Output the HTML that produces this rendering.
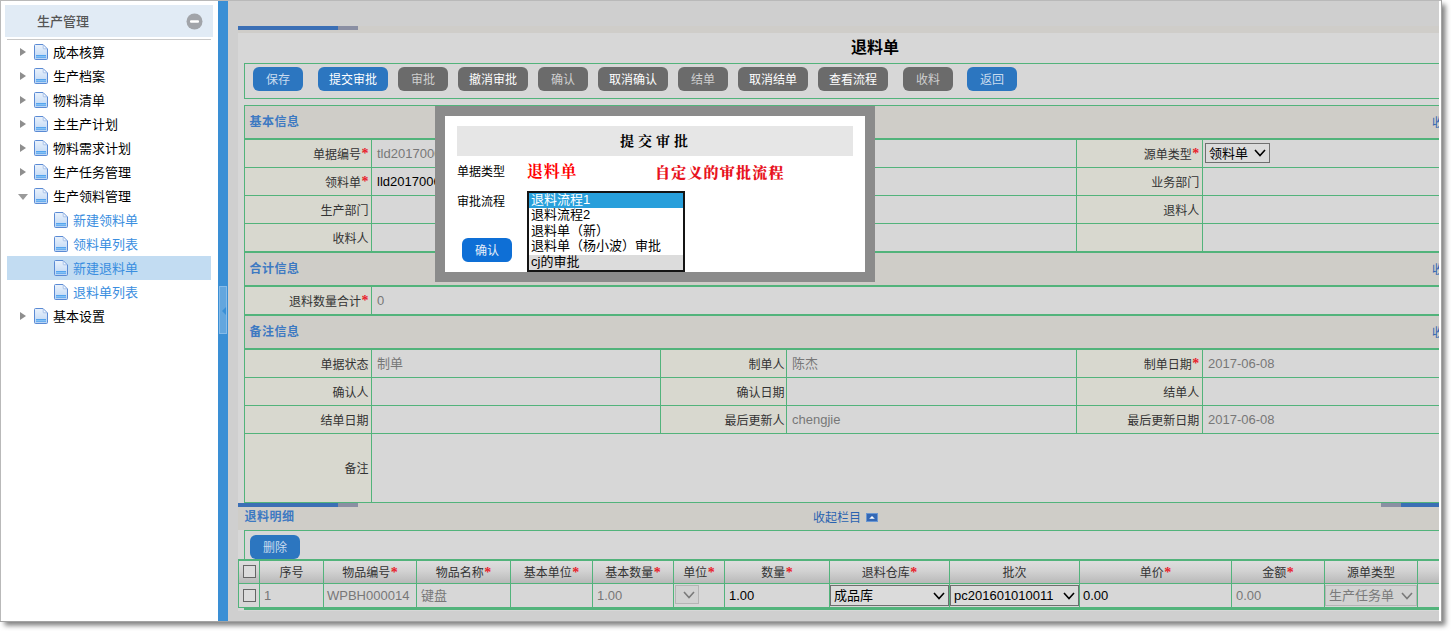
<!DOCTYPE html>
<html lang="zh-CN">
<head>
<meta charset="utf-8">
<title>退料单</title>
<style>
*{box-sizing:border-box;margin:0;padding:0}
html,body{width:1451px;height:631px;overflow:hidden;background:#fff}
body{position:relative;font-family:"Liberation Sans","Noto Sans CJK SC",sans-serif;font-size:12px;color:#333;font-weight:400}
.abs{position:absolute}
#frame{position:absolute;left:0;top:0;width:1442px;height:622px;overflow:hidden;background:#fff;box-shadow:3.5px 3.5px 5px 0 rgba(0,0,0,0.5)}
#bT{position:absolute;left:0;top:0;width:1442px;height:1px;background:#b9b9b9;z-index:50}
#bL{position:absolute;left:0;top:0;width:1px;height:622px;background:#b9b9b9;z-index:50}
#bB{position:absolute;left:0;top:621px;width:1442px;height:1px;background:#a3a3a3;z-index:50}
#bR{position:absolute;left:1441px;top:0;width:1px;height:622px;background:#a3a3a3;z-index:50}
#whiteR{position:absolute;left:1439px;top:1px;width:2px;height:620px;background:rgba(255,255,255,0.82)}
/* sidebar */
#side{position:absolute;left:0;top:0;width:218px;height:621px;background:#fff}
#shead{position:absolute;left:5px;top:5px;width:208px;height:32px;background:#e1ebf5}
#shead span{position:absolute;left:32px;top:0;line-height:33px;font-size:13px;color:#555;font-weight:500}
#sline{position:absolute;left:7px;top:39px;width:204px;height:1px;background:#c9c9c9}
.tr{position:absolute;left:7px;width:204px;height:24px;line-height:24px;font-size:13px;color:#000;white-space:nowrap}
.tr .ar{position:absolute;left:13px;top:8.2px;width:0;height:0;border-left:6.5px solid #8e8e8e;border-top:4.6px solid transparent;border-bottom:4.6px solid transparent}
.tr .ad{position:absolute;left:11px;top:10px;width:0;height:0;border-top:6.5px solid #9a9a9a;border-left:5px solid transparent;border-right:5px solid transparent}
.tr svg{position:absolute;left:27px;top:4px}
.tr b{position:absolute;left:46px;top:1px;font-weight:400}
.tr.c{color:#3a8ee0}
.tr.c svg{left:47px}
.tr.c b{left:66px}
.tr.sel{background:#c2dcf2}
#bar{position:absolute;left:218px;top:0;width:10px;height:621px;background:#3a8fd5}
#hand{position:absolute;left:219px;top:286px;width:8px;height:48px;background:#63a6de;border:1px solid #86bbe8}
#hand i{position:absolute;left:1.5px;top:20px;width:0;height:0;border-right:4.5px solid #3a8fd5;border-top:4.5px solid transparent;border-bottom:4.5px solid transparent}
/* main */
#main{position:absolute;left:228px;top:0;width:1211px;height:621px;background:#cfcfcf;overflow:hidden}
#panel{position:absolute;left:10px;top:33px;width:1300px;height:578px;background:#d7d7d7}

#m{position:absolute;left:-228px;top:0;width:1460px;height:621px}
.ttl{font-size:16px;font-weight:700;color:#000}
.vl,.td,.sl{font-weight:400}
.btn{height:24px;line-height:27px;border-radius:6px;text-align:center;font-size:12px;white-space:nowrap}
.b2{background:#2c76c0;color:#c9dcef}
.b4{background:#2c76c0;color:#fff}
.g2{background:#6b6b6b;color:#cfcfcf}
.g4{background:#6b6b6b;color:#fff}
.sh{font-size:12px;font-weight:700;color:#3d79c2;white-space:nowrap;letter-spacing:0.5px;margin-left:-0.5px}
.lk{padding-top:1px;font-size:12px;color:#2a62b0;white-space:nowrap}
.lb{text-align:right;padding-top:1.5px;font-size:12px;color:#333;white-space:nowrap}
.rq{color:#e8202a;font-style:normal;font-weight:700;font-family:"Liberation Serif","Noto Serif CJK SC",serif;font-size:14px;line-height:0;position:relative;top:-0.5px;margin-left:0.5px}
.vl{font-size:13px;color:#777;white-space:nowrap}
.th{height:22px;line-height:24px;text-align:center;font-size:12px;color:#333;white-space:nowrap}
.td{height:23px;line-height:23px;font-size:13px;white-space:nowrap}
.cb{width:13px;height:13px;border:1px solid #666;background:#dcdcdc}
.sl{border:1px solid #6f6f6f;background:#dbdbdb;color:#000;font-size:13px;padding-left:3px;white-space:nowrap;overflow:hidden}
.sl svg{position:absolute;right:3px;top:50%;margin-top:-4px}
.sl.dis{color:#7a7a7a;border-color:#b5b5b5;background:#d2d2d2}
/* modal */
#mo{position:absolute;left:435px;top:106px;width:440px;height:176px;background:#8b8b8b}
#mi{position:absolute;left:10px;top:10px;width:420px;height:156px;background:#fff}
#mt{position:absolute;left:12px;top:10px;width:396px;height:30px;line-height:30px;background:#e6e6e6;text-align:center;font-family:"Liberation Serif","Noto Serif CJK SC",serif;font-weight:700;font-size:14px;color:#000;letter-spacing:4px;padding-left:2px;padding-top:1px}
.ml{position:absolute;left:12px;padding-top:1.5px;font-size:12px;color:#000;line-height:20px;height:20px;white-space:nowrap}
.mr{position:absolute;font-family:"Liberation Serif","Noto Serif CJK SC",serif;font-weight:700;color:#f00;white-space:nowrap;line-height:22px;height:22px}
#lbx{position:absolute;left:82px;top:75px;width:158px;height:81px;border:2px solid #141414;background:#fff;font-size:13px;color:#000}
#lbx div{height:15.4px;line-height:13.6px;padding-left:2px;white-space:nowrap}
#lbx .s{background:#289fdb;color:#fff}
#lbx .h{background:#dcdcdc}
#mok{position:absolute;left:17px;top:122px;width:50px;height:24px;line-height:27px;border-radius:6px;background:#0e6fd6;color:#e6f0fb;text-align:center;font-size:12px}
</style>
</head>
<body>
<svg width="0" height="0" style="position:absolute">
<defs>
<linearGradient id="dg" x1="0" y1="0" x2="0" y2="1"><stop offset="0" stop-color="#eaf2fc"/><stop offset="0.6" stop-color="#cfe1f7"/><stop offset="1" stop-color="#b7d3f4"/></linearGradient>
</defs>
</svg>
<div id="frame">
<div id="side">
<div id="shead"><span>生产管理</span>
<svg class="abs" style="left:181px;top:8px" width="17" height="17" viewBox="0 0 17 17"><circle cx="8.5" cy="8.5" r="8" fill="#a1a4a9"/><rect x="4" y="7.3" width="9" height="2.4" rx="1" fill="#fff"/></svg>
</div>
<div id="sline"></div>
<div class="tr" style="top:40px"><i class="ar"></i><svg width="14" height="16" viewBox="0 0 14 16"><path d="M1.5 0.5 H9 L13.5 5 V14.5 Q13.5 15.5 12.5 15.5 H1.5 Q0.5 15.5 0.5 14.5 V1.5 Q0.5 0.5 1.5 0.5 Z" fill="url(#dg)" stroke="#5a8ad4" stroke-width="1"/><path d="M9.2 0.8 V4.2 Q9.2 4.8 9.8 4.8 H13.2 Z" fill="#f1f6fd" stroke="#8fb0e4" stroke-width="0.7"/><rect x="2" y="11" width="10" height="2.8" fill="#55a4ee"/><rect x="2" y="12" width="10" height="0.9" fill="#8cc6f7"/></svg><b>成本核算</b></div>
<div class="tr" style="top:64px"><i class="ar"></i><svg width="14" height="16" viewBox="0 0 14 16"><path d="M1.5 0.5 H9 L13.5 5 V14.5 Q13.5 15.5 12.5 15.5 H1.5 Q0.5 15.5 0.5 14.5 V1.5 Q0.5 0.5 1.5 0.5 Z" fill="url(#dg)" stroke="#5a8ad4" stroke-width="1"/><path d="M9.2 0.8 V4.2 Q9.2 4.8 9.8 4.8 H13.2 Z" fill="#f1f6fd" stroke="#8fb0e4" stroke-width="0.7"/><rect x="2" y="11" width="10" height="2.8" fill="#55a4ee"/><rect x="2" y="12" width="10" height="0.9" fill="#8cc6f7"/></svg><b>生产档案</b></div>
<div class="tr" style="top:88px"><i class="ar"></i><svg width="14" height="16" viewBox="0 0 14 16"><path d="M1.5 0.5 H9 L13.5 5 V14.5 Q13.5 15.5 12.5 15.5 H1.5 Q0.5 15.5 0.5 14.5 V1.5 Q0.5 0.5 1.5 0.5 Z" fill="url(#dg)" stroke="#5a8ad4" stroke-width="1"/><path d="M9.2 0.8 V4.2 Q9.2 4.8 9.8 4.8 H13.2 Z" fill="#f1f6fd" stroke="#8fb0e4" stroke-width="0.7"/><rect x="2" y="11" width="10" height="2.8" fill="#55a4ee"/><rect x="2" y="12" width="10" height="0.9" fill="#8cc6f7"/></svg><b>物料清单</b></div>
<div class="tr" style="top:112px"><i class="ar"></i><svg width="14" height="16" viewBox="0 0 14 16"><path d="M1.5 0.5 H9 L13.5 5 V14.5 Q13.5 15.5 12.5 15.5 H1.5 Q0.5 15.5 0.5 14.5 V1.5 Q0.5 0.5 1.5 0.5 Z" fill="url(#dg)" stroke="#5a8ad4" stroke-width="1"/><path d="M9.2 0.8 V4.2 Q9.2 4.8 9.8 4.8 H13.2 Z" fill="#f1f6fd" stroke="#8fb0e4" stroke-width="0.7"/><rect x="2" y="11" width="10" height="2.8" fill="#55a4ee"/><rect x="2" y="12" width="10" height="0.9" fill="#8cc6f7"/></svg><b>主生产计划</b></div>
<div class="tr" style="top:136px"><i class="ar"></i><svg width="14" height="16" viewBox="0 0 14 16"><path d="M1.5 0.5 H9 L13.5 5 V14.5 Q13.5 15.5 12.5 15.5 H1.5 Q0.5 15.5 0.5 14.5 V1.5 Q0.5 0.5 1.5 0.5 Z" fill="url(#dg)" stroke="#5a8ad4" stroke-width="1"/><path d="M9.2 0.8 V4.2 Q9.2 4.8 9.8 4.8 H13.2 Z" fill="#f1f6fd" stroke="#8fb0e4" stroke-width="0.7"/><rect x="2" y="11" width="10" height="2.8" fill="#55a4ee"/><rect x="2" y="12" width="10" height="0.9" fill="#8cc6f7"/></svg><b>物料需求计划</b></div>
<div class="tr" style="top:160px"><i class="ar"></i><svg width="14" height="16" viewBox="0 0 14 16"><path d="M1.5 0.5 H9 L13.5 5 V14.5 Q13.5 15.5 12.5 15.5 H1.5 Q0.5 15.5 0.5 14.5 V1.5 Q0.5 0.5 1.5 0.5 Z" fill="url(#dg)" stroke="#5a8ad4" stroke-width="1"/><path d="M9.2 0.8 V4.2 Q9.2 4.8 9.8 4.8 H13.2 Z" fill="#f1f6fd" stroke="#8fb0e4" stroke-width="0.7"/><rect x="2" y="11" width="10" height="2.8" fill="#55a4ee"/><rect x="2" y="12" width="10" height="0.9" fill="#8cc6f7"/></svg><b>生产任务管理</b></div>
<div class="tr" style="top:184px"><i class="ad"></i><svg width="14" height="16" viewBox="0 0 14 16"><path d="M1.5 0.5 H9 L13.5 5 V14.5 Q13.5 15.5 12.5 15.5 H1.5 Q0.5 15.5 0.5 14.5 V1.5 Q0.5 0.5 1.5 0.5 Z" fill="url(#dg)" stroke="#5a8ad4" stroke-width="1"/><path d="M9.2 0.8 V4.2 Q9.2 4.8 9.8 4.8 H13.2 Z" fill="#f1f6fd" stroke="#8fb0e4" stroke-width="0.7"/><rect x="2" y="11" width="10" height="2.8" fill="#55a4ee"/><rect x="2" y="12" width="10" height="0.9" fill="#8cc6f7"/></svg><b>生产领料管理</b></div>
<div class="tr c" style="top:208px"><svg width="14" height="16" viewBox="0 0 14 16"><path d="M1.5 0.5 H9 L13.5 5 V14.5 Q13.5 15.5 12.5 15.5 H1.5 Q0.5 15.5 0.5 14.5 V1.5 Q0.5 0.5 1.5 0.5 Z" fill="url(#dg)" stroke="#5a8ad4" stroke-width="1"/><path d="M9.2 0.8 V4.2 Q9.2 4.8 9.8 4.8 H13.2 Z" fill="#f1f6fd" stroke="#8fb0e4" stroke-width="0.7"/><rect x="2" y="11" width="10" height="2.8" fill="#55a4ee"/><rect x="2" y="12" width="10" height="0.9" fill="#8cc6f7"/></svg><b>新建领料单</b></div>
<div class="tr c" style="top:232px"><svg width="14" height="16" viewBox="0 0 14 16"><path d="M1.5 0.5 H9 L13.5 5 V14.5 Q13.5 15.5 12.5 15.5 H1.5 Q0.5 15.5 0.5 14.5 V1.5 Q0.5 0.5 1.5 0.5 Z" fill="url(#dg)" stroke="#5a8ad4" stroke-width="1"/><path d="M9.2 0.8 V4.2 Q9.2 4.8 9.8 4.8 H13.2 Z" fill="#f1f6fd" stroke="#8fb0e4" stroke-width="0.7"/><rect x="2" y="11" width="10" height="2.8" fill="#55a4ee"/><rect x="2" y="12" width="10" height="0.9" fill="#8cc6f7"/></svg><b>领料单列表</b></div>
<div class="tr c sel" style="top:256px"><svg width="14" height="16" viewBox="0 0 14 16"><path d="M1.5 0.5 H9 L13.5 5 V14.5 Q13.5 15.5 12.5 15.5 H1.5 Q0.5 15.5 0.5 14.5 V1.5 Q0.5 0.5 1.5 0.5 Z" fill="url(#dg)" stroke="#5a8ad4" stroke-width="1"/><path d="M9.2 0.8 V4.2 Q9.2 4.8 9.8 4.8 H13.2 Z" fill="#f1f6fd" stroke="#8fb0e4" stroke-width="0.7"/><rect x="2" y="11" width="10" height="2.8" fill="#55a4ee"/><rect x="2" y="12" width="10" height="0.9" fill="#8cc6f7"/></svg><b>新建退料单</b></div>
<div class="tr c" style="top:280px"><svg width="14" height="16" viewBox="0 0 14 16"><path d="M1.5 0.5 H9 L13.5 5 V14.5 Q13.5 15.5 12.5 15.5 H1.5 Q0.5 15.5 0.5 14.5 V1.5 Q0.5 0.5 1.5 0.5 Z" fill="url(#dg)" stroke="#5a8ad4" stroke-width="1"/><path d="M9.2 0.8 V4.2 Q9.2 4.8 9.8 4.8 H13.2 Z" fill="#f1f6fd" stroke="#8fb0e4" stroke-width="0.7"/><rect x="2" y="11" width="10" height="2.8" fill="#55a4ee"/><rect x="2" y="12" width="10" height="0.9" fill="#8cc6f7"/></svg><b>退料单列表</b></div>
<div class="tr" style="top:304px"><i class="ar"></i><svg width="14" height="16" viewBox="0 0 14 16"><path d="M1.5 0.5 H9 L13.5 5 V14.5 Q13.5 15.5 12.5 15.5 H1.5 Q0.5 15.5 0.5 14.5 V1.5 Q0.5 0.5 1.5 0.5 Z" fill="url(#dg)" stroke="#5a8ad4" stroke-width="1"/><path d="M9.2 0.8 V4.2 Q9.2 4.8 9.8 4.8 H13.2 Z" fill="#f1f6fd" stroke="#8fb0e4" stroke-width="0.7"/><rect x="2" y="11" width="10" height="2.8" fill="#55a4ee"/><rect x="2" y="12" width="10" height="0.9" fill="#8cc6f7"/></svg><b>基本设置</b></div>
</div>
<div id="bar"></div>
<div id="hand"><i></i></div>
<div id="main">
<div id="panel"></div>
<div id="m">
<div class="abs" style="left:238px;top:26px;width:1222px;height:7px;background:#cfcdc9;"></div>
<div class="abs" style="left:238px;top:26px;width:100px;height:4px;background:#3b6fb5;"></div>
<div class="abs" style="left:338px;top:26px;width:20px;height:4px;background:#8a8fa3;"></div>
<div class="abs ttl" style="left:775px;top:37px;width:200px;height:22px;line-height:22px;text-align:center">退料单</div>
<div class="abs" style="left:244px;top:63px;width:1216px;height:36px;border:1px solid #52b37b"></div>
<div class="abs btn b2" style="left:253px;top:67px;width:50px">保存</div>
<div class="abs btn b4" style="left:318px;top:67px;width:70px">提交审批</div>
<div class="abs btn g2" style="left:398px;top:67px;width:50px">审批</div>
<div class="abs btn g4" style="left:458px;top:67px;width:70px">撤消审批</div>
<div class="abs btn g2" style="left:538px;top:67px;width:50px">确认</div>
<div class="abs btn g4" style="left:598px;top:67px;width:70px">取消确认</div>
<div class="abs btn g2" style="left:678px;top:67px;width:50px">结单</div>
<div class="abs btn g4" style="left:738px;top:67px;width:70px">取消结单</div>
<div class="abs btn g4" style="left:818px;top:67px;width:70px">查看流程</div>
<div class="abs btn g2" style="left:903px;top:67px;width:50px">收料</div>
<div class="abs btn b2" style="left:967px;top:67px;width:50px">返回</div>
<div class="abs" style="left:244px;top:105px;width:1216px;height:1px;background:#52b37b;"></div>
<div class="abs" style="left:245px;top:106px;width:1215px;height:32px;background:#cfcdc8;"></div>
<div class="abs sh" style="left:250px;top:106px;height:32px;line-height:32px">基本信息</div>
<div class="abs lk" style="left:1432px;top:106px;height:32px;line-height:32px">收起栏目</div>
<div class="abs" style="left:244px;top:138px;width:1216px;height:2px;background:#52b37b;"></div>
<div class="abs" style="left:245px;top:140px;width:126px;height:27px;background:#d8d8cf;"></div>
<div class="abs lb" style="left:245px;top:140px;width:123.5px;height:27px;line-height:27px">单据编号<i class="rq">*</i></div>
<div class="abs vl" style="left:377px;top:140px;height:27px;line-height:27px"><span>tld2017006080002</span></div>
<div class="abs" style="left:661px;top:140px;width:126px;height:27px;background:#d8d8cf;"></div>
<div class="abs lb" style="left:661px;top:140px;width:123.5px;height:27px;line-height:27px"></div>
<div class="abs" style="left:1077px;top:140px;width:126px;height:27px;background:#d8d8cf;"></div>
<div class="abs lb" style="left:1077px;top:140px;width:122.2px;height:27px;line-height:27px">源单类型<i class="rq">*</i></div>
<div class="abs" style="left:371px;top:140px;width:1px;height:27px;background:#52b37b;"></div>
<div class="abs" style="left:660px;top:140px;width:1px;height:27px;background:#52b37b;"></div>
<div class="abs" style="left:786px;top:140px;width:1px;height:27px;background:#52b37b;"></div>
<div class="abs" style="left:1076px;top:140px;width:1px;height:27px;background:#52b37b;"></div>
<div class="abs" style="left:1202px;top:140px;width:1px;height:27px;background:#52b37b;"></div>
<div class="abs" style="left:244px;top:167px;width:1216px;height:1px;background:#52b37b;"></div>
<div class="abs" style="left:245px;top:168px;width:126px;height:27px;background:#d8d8cf;"></div>
<div class="abs lb" style="left:245px;top:168px;width:123.5px;height:27px;line-height:27px">领料单<i class="rq">*</i></div>
<div class="abs vl" style="left:377px;top:168px;height:27px;line-height:27px"><span style="color:#000">lld2017006080001</span></div>
<div class="abs" style="left:661px;top:168px;width:126px;height:27px;background:#d8d8cf;"></div>
<div class="abs lb" style="left:661px;top:168px;width:123.5px;height:27px;line-height:27px"></div>
<div class="abs" style="left:1077px;top:168px;width:126px;height:27px;background:#d8d8cf;"></div>
<div class="abs lb" style="left:1077px;top:168px;width:122.2px;height:27px;line-height:27px">业务部门</div>
<div class="abs" style="left:371px;top:168px;width:1px;height:27px;background:#52b37b;"></div>
<div class="abs" style="left:660px;top:168px;width:1px;height:27px;background:#52b37b;"></div>
<div class="abs" style="left:786px;top:168px;width:1px;height:27px;background:#52b37b;"></div>
<div class="abs" style="left:1076px;top:168px;width:1px;height:27px;background:#52b37b;"></div>
<div class="abs" style="left:1202px;top:168px;width:1px;height:27px;background:#52b37b;"></div>
<div class="abs" style="left:244px;top:195px;width:1216px;height:1px;background:#52b37b;"></div>
<div class="abs" style="left:245px;top:196px;width:126px;height:27px;background:#d8d8cf;"></div>
<div class="abs lb" style="left:245px;top:196px;width:123.5px;height:27px;line-height:27px">生产部门</div>
<div class="abs" style="left:661px;top:196px;width:126px;height:27px;background:#d8d8cf;"></div>
<div class="abs lb" style="left:661px;top:196px;width:123.5px;height:27px;line-height:27px"></div>
<div class="abs" style="left:1077px;top:196px;width:126px;height:27px;background:#d8d8cf;"></div>
<div class="abs lb" style="left:1077px;top:196px;width:122.2px;height:27px;line-height:27px">退料人</div>
<div class="abs" style="left:371px;top:196px;width:1px;height:27px;background:#52b37b;"></div>
<div class="abs" style="left:660px;top:196px;width:1px;height:27px;background:#52b37b;"></div>
<div class="abs" style="left:786px;top:196px;width:1px;height:27px;background:#52b37b;"></div>
<div class="abs" style="left:1076px;top:196px;width:1px;height:27px;background:#52b37b;"></div>
<div class="abs" style="left:1202px;top:196px;width:1px;height:27px;background:#52b37b;"></div>
<div class="abs" style="left:244px;top:223px;width:1216px;height:1px;background:#52b37b;"></div>
<div class="abs" style="left:245px;top:224px;width:126px;height:27px;background:#d8d8cf;"></div>
<div class="abs lb" style="left:245px;top:224px;width:123.5px;height:27px;line-height:27px">收料人</div>
<div class="abs" style="left:661px;top:224px;width:126px;height:27px;background:#d8d8cf;"></div>
<div class="abs lb" style="left:661px;top:224px;width:123.5px;height:27px;line-height:27px"></div>
<div class="abs" style="left:1077px;top:224px;width:126px;height:27px;background:#d8d8cf;"></div>
<div class="abs lb" style="left:1077px;top:224px;width:122.2px;height:27px;line-height:27px"></div>
<div class="abs" style="left:371px;top:224px;width:1px;height:27px;background:#52b37b;"></div>
<div class="abs" style="left:660px;top:224px;width:1px;height:27px;background:#52b37b;"></div>
<div class="abs" style="left:786px;top:224px;width:1px;height:27px;background:#52b37b;"></div>
<div class="abs" style="left:1076px;top:224px;width:1px;height:27px;background:#52b37b;"></div>
<div class="abs" style="left:1202px;top:224px;width:1px;height:27px;background:#52b37b;"></div>
<div class="abs" style="left:244px;top:251px;width:1216px;height:2px;background:#52b37b;"></div>
<div class="abs" style="left:245px;top:253px;width:1215px;height:32px;background:#cfcdc8;"></div>
<div class="abs sh" style="left:250px;top:253px;height:32px;line-height:32px">合计信息</div>
<div class="abs lk" style="left:1432px;top:253px;height:32px;line-height:32px">收起栏目</div>
<div class="abs" style="left:244px;top:285px;width:1216px;height:2px;background:#52b37b;"></div>
<div class="abs" style="left:245px;top:287px;width:126px;height:27px;background:#d8d8cf;"></div>
<div class="abs lb" style="left:245px;top:287px;width:123.5px;height:27px;line-height:27px">退料数量合计<i class="rq">*</i></div>
<div class="abs vl" style="left:377px;top:287px;height:27px;line-height:27px"><span>0</span></div>
<div class="abs" style="left:371px;top:287px;width:1px;height:27px;background:#52b37b;"></div>
<div class="abs" style="left:244px;top:314px;width:1216px;height:2px;background:#52b37b;"></div>
<div class="abs" style="left:245px;top:316px;width:1215px;height:32px;background:#cfcdc8;"></div>
<div class="abs sh" style="left:250px;top:316px;height:32px;line-height:32px">备注信息</div>
<div class="abs lk" style="left:1432px;top:316px;height:32px;line-height:32px">收起栏目</div>
<div class="abs" style="left:244px;top:348px;width:1216px;height:2px;background:#52b37b;"></div>
<div class="abs" style="left:245px;top:350px;width:126px;height:27px;background:#d8d8cf;"></div>
<div class="abs lb" style="left:245px;top:350px;width:123.5px;height:27px;line-height:27px">单据状态</div>
<div class="abs vl" style="left:377px;top:350px;height:27px;line-height:27px"><span>制单</span></div>
<div class="abs" style="left:661px;top:350px;width:126px;height:27px;background:#d8d8cf;"></div>
<div class="abs lb" style="left:661px;top:350px;width:123.5px;height:27px;line-height:27px">制单人</div>
<div class="abs vl" style="left:792px;top:350px;height:27px;line-height:27px"><span>陈杰</span></div>
<div class="abs" style="left:1077px;top:350px;width:126px;height:27px;background:#d8d8cf;"></div>
<div class="abs lb" style="left:1077px;top:350px;width:122.2px;height:27px;line-height:27px">制单日期<i class="rq">*</i></div>
<div class="abs vl" style="left:1208px;top:350px;height:27px;line-height:27px"><span>2017-06-08</span></div>
<div class="abs" style="left:371px;top:350px;width:1px;height:27px;background:#52b37b;"></div>
<div class="abs" style="left:660px;top:350px;width:1px;height:27px;background:#52b37b;"></div>
<div class="abs" style="left:786px;top:350px;width:1px;height:27px;background:#52b37b;"></div>
<div class="abs" style="left:1076px;top:350px;width:1px;height:27px;background:#52b37b;"></div>
<div class="abs" style="left:1202px;top:350px;width:1px;height:27px;background:#52b37b;"></div>
<div class="abs" style="left:244px;top:377px;width:1216px;height:1px;background:#52b37b;"></div>
<div class="abs" style="left:245px;top:378px;width:126px;height:27px;background:#d8d8cf;"></div>
<div class="abs lb" style="left:245px;top:378px;width:123.5px;height:27px;line-height:27px">确认人</div>
<div class="abs" style="left:661px;top:378px;width:126px;height:27px;background:#d8d8cf;"></div>
<div class="abs lb" style="left:661px;top:378px;width:123.5px;height:27px;line-height:27px">确认日期</div>
<div class="abs" style="left:1077px;top:378px;width:126px;height:27px;background:#d8d8cf;"></div>
<div class="abs lb" style="left:1077px;top:378px;width:122.2px;height:27px;line-height:27px">结单人</div>
<div class="abs" style="left:371px;top:378px;width:1px;height:27px;background:#52b37b;"></div>
<div class="abs" style="left:660px;top:378px;width:1px;height:27px;background:#52b37b;"></div>
<div class="abs" style="left:786px;top:378px;width:1px;height:27px;background:#52b37b;"></div>
<div class="abs" style="left:1076px;top:378px;width:1px;height:27px;background:#52b37b;"></div>
<div class="abs" style="left:1202px;top:378px;width:1px;height:27px;background:#52b37b;"></div>
<div class="abs" style="left:244px;top:405px;width:1216px;height:1px;background:#52b37b;"></div>
<div class="abs" style="left:245px;top:406px;width:126px;height:27px;background:#d8d8cf;"></div>
<div class="abs lb" style="left:245px;top:406px;width:123.5px;height:27px;line-height:27px">结单日期</div>
<div class="abs" style="left:661px;top:406px;width:126px;height:27px;background:#d8d8cf;"></div>
<div class="abs lb" style="left:661px;top:406px;width:123.5px;height:27px;line-height:27px">最后更新人</div>
<div class="abs vl" style="left:792px;top:406px;height:27px;line-height:27px"><span>chengjie</span></div>
<div class="abs" style="left:1077px;top:406px;width:126px;height:27px;background:#d8d8cf;"></div>
<div class="abs lb" style="left:1077px;top:406px;width:122.2px;height:27px;line-height:27px">最后更新日期</div>
<div class="abs vl" style="left:1208px;top:406px;height:27px;line-height:27px"><span>2017-06-08</span></div>
<div class="abs" style="left:371px;top:406px;width:1px;height:27px;background:#52b37b;"></div>
<div class="abs" style="left:660px;top:406px;width:1px;height:27px;background:#52b37b;"></div>
<div class="abs" style="left:786px;top:406px;width:1px;height:27px;background:#52b37b;"></div>
<div class="abs" style="left:1076px;top:406px;width:1px;height:27px;background:#52b37b;"></div>
<div class="abs" style="left:1202px;top:406px;width:1px;height:27px;background:#52b37b;"></div>
<div class="abs" style="left:244px;top:433px;width:1216px;height:1px;background:#52b37b;"></div>
<div class="abs" style="left:245px;top:434px;width:126px;height:68px;background:#d8d8cf;"></div>
<div class="abs lb" style="left:245px;top:433px;width:123.5px;height:68px;line-height:68px">备注</div>
<div class="abs" style="left:371px;top:434px;width:1px;height:68px;background:#52b37b;"></div>
<div class="abs" style="left:244px;top:502px;width:1216px;height:1px;background:#52b37b;"></div>
<div class="abs" style="left:244px;top:105px;width:1px;height:398px;background:#52b37b;"></div>
<div class="abs" style="left:238px;top:503px;width:1222px;height:27px;background:#cfcdc8;"></div>
<div class="abs" style="left:238px;top:503px;width:100px;height:4px;background:#3b6fb5;"></div>
<div class="abs" style="left:338px;top:503px;width:20px;height:4px;background:#8a8fa3;"></div>
<div class="abs" style="left:1381px;top:503px;width:20px;height:4px;background:#8a8fa3;"></div>
<div class="abs" style="left:1401px;top:503px;width:60px;height:4px;background:#3b6fb5;"></div>
<div class="abs sh" style="left:245px;top:505px;height:25px;line-height:25px">退料明细</div>
<div class="abs lk" style="left:813px;top:505px;height:25px;line-height:25px">收起栏目</div>
<svg class="abs" style="left:865.5px;top:512.5px" width="12" height="9" viewBox="0 0 12 9"><rect x="0.5" y="0.5" width="11" height="8" fill="#3468b5" stroke="#6a97d3"/><path d="M3.2 5.8 L6 3 L8.8 5.8 Z" fill="#fff"/></svg>
<div class="abs" style="left:244px;top:530px;width:1216px;height:79px;border:1px solid #52b37b"></div>
<div class="abs btn b2" style="left:250px;top:535px;width:50px">删除</div>
<div class="abs" style="left:239px;top:561px;width:1221px;height:22px;background:linear-gradient(to bottom,#dedede 0,#d2d2d2 45%,#b9b9b9 100%);"></div>
<div class="abs" style="left:239px;top:584px;width:1221px;height:23px;background:#d7d7d7;"></div>
<div class="abs" style="left:238px;top:559px;width:1222px;height:2px;background:#52b37b;"></div>
<div class="abs" style="left:238px;top:583px;width:1222px;height:1px;background:#52b37b;"></div>
<div class="abs" style="left:238px;top:607px;width:1222px;height:1px;background:#52b37b;"></div>
<div class="abs" style="left:244px;top:608px;width:1216px;height:2px;background:#52b37b;"></div>
<div class="abs" style="left:238px;top:559px;width:1px;height:49px;background:#52b37b;"></div>
<div class="abs" style="left:259px;top:559px;width:1px;height:49px;background:#52b37b;"></div>
<div class="abs th" style="left:260px;top:561px;width:63px">序号</div>
<div class="abs" style="left:323px;top:559px;width:1px;height:49px;background:#52b37b;"></div>
<div class="abs th" style="left:324px;top:561px;width:92px">物品编号<i class="rq">*</i></div>
<div class="abs" style="left:416px;top:559px;width:1px;height:49px;background:#52b37b;"></div>
<div class="abs th" style="left:417px;top:561px;width:93px">物品名称<i class="rq">*</i></div>
<div class="abs" style="left:510px;top:559px;width:1px;height:49px;background:#52b37b;"></div>
<div class="abs th" style="left:511px;top:561px;width:81px">基本单位<i class="rq">*</i></div>
<div class="abs" style="left:592px;top:559px;width:1px;height:49px;background:#52b37b;"></div>
<div class="abs th" style="left:593px;top:561px;width:80px">基本数量<i class="rq">*</i></div>
<div class="abs" style="left:673px;top:559px;width:1px;height:49px;background:#52b37b;"></div>
<div class="abs th" style="left:674px;top:561px;width:50px">单位<i class="rq">*</i></div>
<div class="abs" style="left:724px;top:559px;width:1px;height:49px;background:#52b37b;"></div>
<div class="abs th" style="left:725px;top:561px;width:104px">数量<i class="rq">*</i></div>
<div class="abs" style="left:829px;top:559px;width:1px;height:49px;background:#52b37b;"></div>
<div class="abs th" style="left:830px;top:561px;width:119px">退料仓库<i class="rq">*</i></div>
<div class="abs" style="left:949px;top:559px;width:1px;height:49px;background:#52b37b;"></div>
<div class="abs th" style="left:950px;top:561px;width:129px">批次</div>
<div class="abs" style="left:1079px;top:559px;width:1px;height:49px;background:#52b37b;"></div>
<div class="abs th" style="left:1080px;top:561px;width:151px">单价<i class="rq">*</i></div>
<div class="abs" style="left:1231px;top:559px;width:1px;height:49px;background:#52b37b;"></div>
<div class="abs th" style="left:1232px;top:561px;width:92px">金额<i class="rq">*</i></div>
<div class="abs" style="left:1324px;top:559px;width:1px;height:49px;background:#52b37b;"></div>
<div class="abs th" style="left:1325px;top:561px;width:92px">源单类型</div>
<div class="abs" style="left:1417px;top:559px;width:1px;height:49px;background:#52b37b;"></div>
<div class="abs cb" style="left:243px;top:565px"></div>
<div class="abs cb" style="left:243px;top:589px"></div>
<div class="abs td" style="left:264px;top:584px;color:#777">1</div>
<div class="abs td" style="left:327px;top:584px;color:#777">WPBH000014</div>
<div class="abs td" style="left:421px;top:584px;color:#777">键盘</div>
<div class="abs td" style="left:597px;top:584px;color:#777">1.00</div>
<div class="abs td" style="left:729px;top:584px;color:#000">1.00</div>
<div class="abs td" style="left:1083px;top:584px;color:#000">0.00</div>
<div class="abs td" style="left:1236px;top:584px;color:#777">0.00</div>
<div class="abs sl" style="left:1205px;top:143px;width:65px;height:20px;line-height:20px">领料单<svg width="12" height="8" viewBox="0 0 12 8"><path d="M1 1 L6 6.5 L11 1" fill="none" stroke="currentColor" stroke-width="1.6"/></svg></div>
<div class="abs sl dis" style="left:675px;top:585px;width:24px;height:19px;line-height:17px"><svg width="12" height="8" viewBox="0 0 12 8"><path d="M1 1 L6 6.5 L11 1" fill="none" stroke="currentColor" stroke-width="1.6"/></svg></div>
<div class="abs sl" style="left:830px;top:585px;width:119px;height:21px;line-height:19px">成品库<svg width="12" height="8" viewBox="0 0 12 8"><path d="M1 1 L6 6.5 L11 1" fill="none" stroke="currentColor" stroke-width="1.6"/></svg></div>
<div class="abs sl" style="left:950px;top:585px;width:129px;height:21px;line-height:19px">pc201601010011<svg width="12" height="8" viewBox="0 0 12 8"><path d="M1 1 L6 6.5 L11 1" fill="none" stroke="currentColor" stroke-width="1.6"/></svg></div>
<div class="abs sl dis" style="left:1325px;top:585px;width:92px;height:21px;line-height:19px">生产任务单<svg width="12" height="8" viewBox="0 0 12 8"><path d="M1 1 L6 6.5 L11 1" fill="none" stroke="currentColor" stroke-width="1.6"/></svg></div>
<div id="mo"><div id="mi">
<div id="mt">提交审批</div>
<div class="ml" style="top:44px">单据类型</div>
<div class="mr" style="left:82px;top:45px;font-size:16px;letter-spacing:0.7px">退料单</div>
<div class="mr" style="left:210px;top:46px;font-size:15px;letter-spacing:1.2px;font-weight:900;color:#e8141e">自定义的审批流程</div>
<div class="ml" style="top:74px">审批流程</div>
<div id="lbx"><div class="s">退料流程1</div><div>退料流程2</div><div>退料单（新）</div><div>退料单（杨小波）审批</div><div class="h">cj的审批</div></div>
<div id="mok">确认</div>
</div></div>
</div>
</div>
<div id="whiteR"></div><div id="bT"></div><div id="bL"></div><div id="bB"></div><div id="bR"></div>
</div>
</body>
</html>
